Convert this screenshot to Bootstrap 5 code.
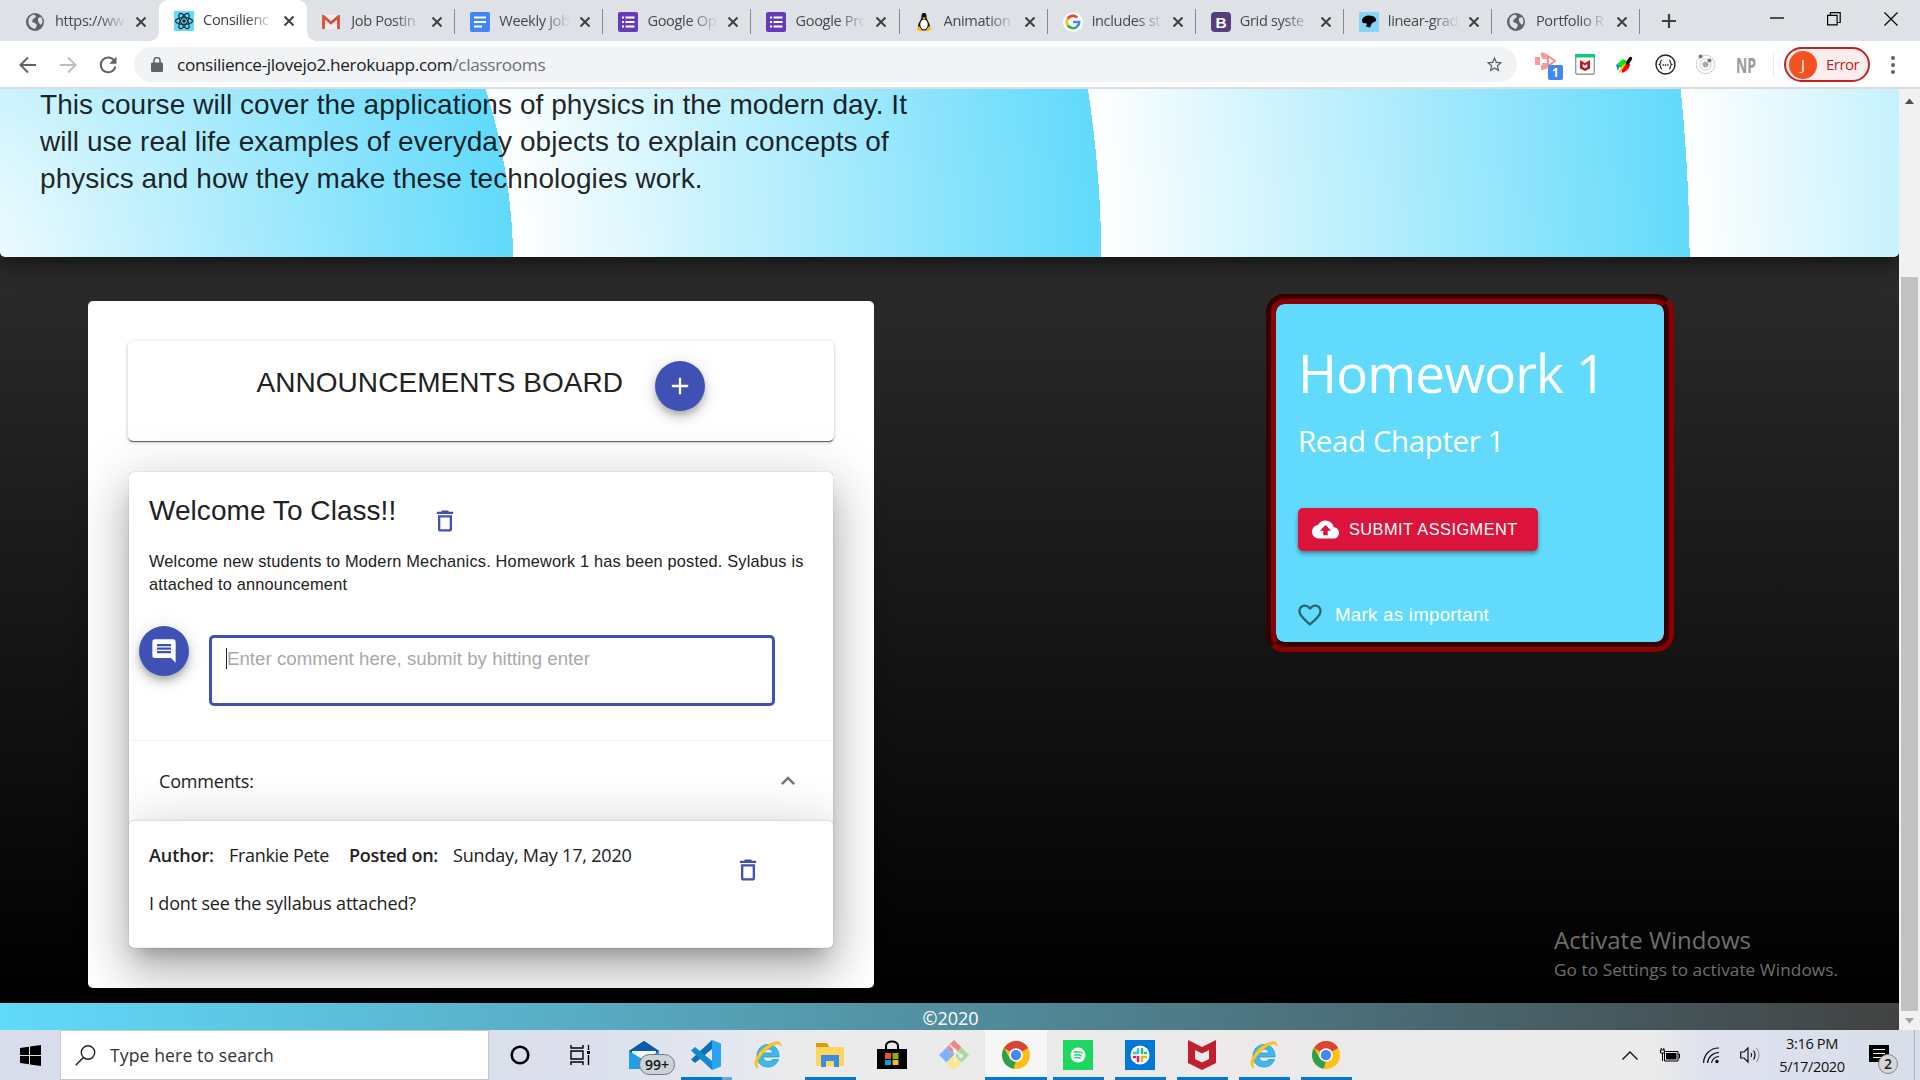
<!DOCTYPE html>
<html lang="en">
<head>
<meta charset="utf-8">
<title>Consilience</title>
<link href="https://cdn.jsdelivr.net/npm/bootstrap@5.3.0/dist/css/bootstrap.min.css" rel="stylesheet">
<style>
body{width:1920px;height:1080px;overflow:hidden;font-family:"Open Sans","Noto Sans",sans-serif;color:#212121;font-size:18.67px;line-height:1.5}
svg{display:block;flex:none}
.arial{font-family:"Liberation Sans",Arial,sans-serif}
.nw{white-space:nowrap}
/* browser chrome */
.tabstrip{height:41px;background:#dee1e6;padding-left:11px}
.tab-item{width:148.1px;height:41px;padding-left:15px;position:relative;font-size:14.6px;color:#45494d}
.tab-item .ttl{width:71px;margin-left:11px;margin-top:-1px;white-space:nowrap;letter-spacing:-.35px;-webkit-mask-image:linear-gradient(90deg,#000 62%,transparent 100%);mask-image:linear-gradient(90deg,#000 62%,transparent 100%)}
.tab-item .ttl.near{margin-left:9px}
.tab-item .cls{margin-left:9px}
.tab-item .near + .cls{margin-left:9px}
.tab-item.sep{border-right:1px solid #85888c}
.tab-item.sep,.tab-item.nosep{height:25px;margin-top:9px;align-self:flex-start}
.tab-item.on{background:#fff;border-radius:9px 9px 0 0;color:#3c4043}
.tab-item.on::before,.tab-item.on::after{content:"";position:absolute;bottom:0;width:9px;height:9px}
.tab-item.on::before{left:-9px;background:radial-gradient(circle at 0 0,transparent 8.5px,#fff 9px)}
.tab-item.on::after{right:-9px;background:radial-gradient(circle at 100% 0,transparent 8.5px,#fff 9px)}
.toolbar{height:48px;border-bottom:2px solid #dadce0;background:#fff;padding-left:19px;padding-top:1px}
.urlbar{width:1383px;height:35px;border-radius:18px;background:#f1f3f4;margin-left:17px;padding:0 13px 0 17px;font-size:17.2px;color:#202124}
.url-path{color:#6b6f74}
.profile{width:86px;height:35px;border:2px solid #c5221f;border-radius:18px;background:#fceeee;padding-left:3px;color:#b3261e;font-size:15px}
.avatar-j{width:28px;height:28px;border-radius:50%;background:#f4511e;color:#fff;font-size:15px}
/* page */
.viewport{height:941px}
.page{width:1899px;height:941px;overflow:hidden;background:linear-gradient(#2c2c2c 150px,#000 914px)}
.banner{height:171.500px;margin-top:-3.5px;padding-left:40px;border-radius:0 0 5px 5px;position:relative;
 background:repeating-radial-gradient(circle at -75px 181px,#fff 0,#61dafb 588.2px);box-shadow:0 4px 22px 2px rgba(0,0,0,.6)}
.banner p{width:900px;font-size:28px;line-height:37.33px;letter-spacing:.053px;color:rgba(0,0,0,.87)}
.board{width:786px;height:687px;margin:44px 0 0 88px;border-radius:5px;background:#fff;padding:39.5px 39px 0 40px}
.board-head{width:706px;height:100px;border-radius:5px;box-shadow:0 2px 1px -1px rgba(0,0,0,.45),0 1px 1px rgba(0,0,0,.25),0 1px 4px rgba(0,0,0,.2);padding:20px 0 0 128.500px}
.h28{font-size:28px;line-height:37.33px;font-weight:400;letter-spacing:.05px}
.fab{width:50px;height:50px;border-radius:50%;background:#3f51b5;color:#fff;box-shadow:0 4px 6px -1px rgba(0,0,0,.2),0 7px 12px rgba(0,0,0,.14),0 1px 21px rgba(0,0,0,.1);flex:none}
.post{width:704px;height:476px;margin:31px 0 0 1px;border-radius:5px;box-shadow:0 0 1px rgba(0,0,0,.4),0 13px 18px -8px rgba(0,0,0,.25),0 28px 44px 3px rgba(0,0,0,.17),0 9px 54px 9px rgba(0,0,0,.13)}
.post-body{height:268px;padding:20px 0 0 20px}
.post-text{width:670px;font-size:16.33px;line-height:23.3px;margin:21px 0 0;letter-spacing:.2px}
.cmt-row{margin:30px 0 0 -10px}
.cmt-box{width:566px;height:71px;margin:9px 0 0 20px;border:3px solid #3f51b5;border-radius:5px;font-size:18.67px;line-height:22px;color:#a8a8a8;padding:10px 0 0 14px;letter-spacing:.025px}
.caret{width:1px;height:21px;background:#222}
.seg{font-size:18px;line-height:28px;letter-spacing:-.18px}
.cmt-head{height:81px;border-top:1px solid #f5f5f5;padding:0 31px 0 30px}
.reply{height:127px;border-radius:5px;background:#fff;box-shadow:0 0 2px rgba(0,0,0,.3),0 -6px 45px rgba(0,0,0,.13);clip-path:inset(-70px 0 0 0);padding:20px 0 0 20px}
.w65{width:65px;letter-spacing:-.1px}.w100{width:100px;letter-spacing:-.32px}.w89{width:89px;letter-spacing:-.25px}
.hw{width:408px;height:358px;margin:37px 0 0 392px;border:10px groove darkred;border-radius:18px;background:#61dafb;color:#fff;padding:28px 0 0 22px;background-clip:padding-box}
.hw-title{font-size:53px;line-height:82px;letter-spacing:-.9px;font-weight:400}
.hw-sub{font-size:29.500px;line-height:44px;letter-spacing:-.4px;margin-top:5px}
.hw-btn{width:240px;height:43px;border-radius:5px;background:#dc143c;font-size:16.33px;padding-left:14px;margin-top:45px;box-shadow:0 3px 4px -1px rgba(0,0,0,.3),0 2px 5px rgba(0,0,0,.2)}
.hw-like{margin-top:50px;font-size:18.67px;letter-spacing:.277px}
.foot{height:27px;background:linear-gradient(90deg,#61dafb,#424242);color:#fff;position:absolute;left:0;bottom:0;width:1899px;padding:3px 0 0 2px;font-size:18px}
.watermark{position:absolute;left:1554px;top:832px;color:#6f6f6f}
.wm1{font-size:24px;line-height:38px}
.wm2{font-size:17.2px;line-height:21px;letter-spacing:.07px}
.sbar{width:21px;background:#f1f1f1}
.sthumb{width:17px;height:734px;margin-top:173px;background:#c1c1c1}
/* taskbar */
.taskbar{height:50px;background:linear-gradient(90deg,#d7ddea 0,#dbe0ec 600px,#e6e8f0 740px,#ebebeb 800px,#ebe9ea 1250px,#ebebeb 1650px,#dde2ee 1710px,#d8dee9 100%)}
.start{width:60px;padding-left:20px}
.search{width:429px;height:50px;background:#fff;border:1px solid #c8c8c8;padding-left:14px;font-size:17.6px;letter-spacing:.1px;color:#333}
.slot{width:62px;height:50px;position:relative}
.slot.run::after{content:"";position:absolute;left:6px;bottom:0;width:51px;height:3px;background:#0078d7}
.slot.act{background:#f6f6f7}
.slot.act::after{left:0;width:62px}
.slot.multi::after{background:linear-gradient(90deg,#0078d7 41px,#5fa9e4 41px)}
.cnt{position:absolute;left:26px;top:24px;height:21px;width:36px;border:1px solid #777;border-radius:11px;background:#ccd3d6;font-size:14px;line-height:19px;font-weight:600;color:#111;text-align:center}
.clock{font-size:14.6px;line-height:23px;letter-spacing:-.4px;color:#111;width:92px}
.ncnt{position:absolute;left:9px;top:9px;width:20px;height:20px;border-radius:50%;border:1px solid #888;background:#d5d7da;font-size:14px;line-height:18px;font-weight:600;text-align:center}
</style>
</head>
<body>
<svg width="0" height="0" class="position-absolute">
 <symbol id="globe" viewBox="0 0 18 18"><circle cx="9" cy="9" r="9" fill="#5f6368"/><path d="M3 5c2-3 5-4 6-3l1 2-3 2-1 3 3 1 2 2-2 4c-4-1-8-4-6-11zM12 5l3-1c2 3 2 6 0 8l-2-2-1-2z" fill="#dee1e6"/></symbol>
 <symbol id="x" viewBox="0 0 12 12"><path d="M1.5 1.5l9 9M10.500 1.500l-9 9" stroke="#3c4043" stroke-width="2"/></symbol>
 <symbol id="forms" viewBox="0 0 20 20"><rect width="20" height="20" rx="2" fill="#673ab7"/><path d="M4 5.500h2M4 10h2M4 14.500h2M7.500 5.500h9M7.500 10h9M7.500 14.500h9" stroke="#fff" stroke-width="2"/></symbol>
 <symbol id="trash" viewBox="0 0 24 24"><path fill="#3f51b5" d="M6 19c0 1.100.9 2 2 2h8c1.100 0 2-.9 2-2V7H6v12zM8 9h8v10H8V9zm7.500-5l-1-1h-5l-1 1H5v2h14V4z"/></symbol>
 <symbol id="chrome" viewBox="0 0 28 28"><circle cx="14" cy="14" r="14" fill="#fbc116"/><path d="M14 14L1.900 7A14 14 0 0 1 26.100 7z" fill="#d94435"/><path d="M14 0a14 14 0 0 1 12.100 7H14z" fill="#d94435"/><path d="M1.900 7L8 17.500 14 20l-2.500 7.800A14 14 0 0 1 1.900 7z" fill="#2da04e"/><circle cx="14" cy="14" r="6.800" fill="#fff"/><circle cx="14" cy="14" r="5.200" fill="#4688f1"/></symbol>
 <symbol id="ie" viewBox="0 0 30 30"><path d="M26 17H10c.5 3 2.500 4.500 5 4.500 2 0 3.500-.8 4.500-2h6C24 24 20 27 15 27 8.500 27 4 22.500 4 16S8.500 4.500 15 4.500 26.500 9.500 26 17zM10.200 13h9.600c-.3-2.500-2-4-4.800-4s-4.500 1.500-4.800 4z" fill="#3fb8ea" stroke="#1b8fd0" stroke-width=".7"/><path d="M5 28C-2 26 4 12 14 5.500 22 .5 29 .5 28 6c0-3-6-3-13 3C7 15 2 24 5 28z" fill="#fcc923" stroke="#eba900" stroke-width=".5"/></symbol>
</svg>

<div class="tabstrip d-flex align-items-center">
 <div class="tab-item nosep d-flex align-items-center"><svg width="18" height="18"><use href="#globe"/></svg><div class="ttl">https://ww</div><svg class="cls" width="12" height="12"><use href="#x"/></svg></div>
 <div class="tab-item on d-flex align-items-center"><svg width="20" height="20" viewBox="0 0 20 20"><rect width="20" height="20" rx="1" fill="#61dafb"/><g fill="none" stroke="#16323a" stroke-width="1.200"><ellipse cx="10" cy="10" rx="8.500" ry="3.400"/><ellipse cx="10" cy="10" rx="8.500" ry="3.400" transform="rotate(60 10 10)"/><ellipse cx="10" cy="10" rx="8.500" ry="3.400" transform="rotate(120 10 10)"/></g><circle cx="10" cy="10" r="1.800" fill="#16323a"/></svg><div class="ttl near">Consilienc</div><svg class="cls" width="12" height="12"><use href="#x"/></svg></div>
 <div class="tab-item sep d-flex align-items-center"><svg width="18" height="14" viewBox="0 0 18 14"><path d="M1 0h16v14H1z" fill="#eee"/><path d="M1.500 14V1.500L9 8l7.500-6.500V14" fill="none" stroke="#dd4b39" stroke-width="2.800"/></svg><div class="ttl">Job Postin</div><svg class="cls" width="12" height="12"><use href="#x"/></svg></div>
 <div class="tab-item sep d-flex align-items-center"><svg width="20" height="20" viewBox="0 0 20 20"><rect width="20" height="20" rx="2" fill="#4285f4"/><path d="M4 5.500h12M4 10h12M4 14.500h8" stroke="#fff" stroke-width="2"/></svg><div class="ttl near">Weekly job</div><svg class="cls" width="12" height="12"><use href="#x"/></svg></div>
 <div class="tab-item sep d-flex align-items-center"><svg width="20" height="20"><use href="#forms"/></svg><div class="ttl near">Google Op</div><svg class="cls" width="12" height="12"><use href="#x"/></svg></div>
 <div class="tab-item sep d-flex align-items-center"><svg width="20" height="20"><use href="#forms"/></svg><div class="ttl near">Google Pro</div><svg class="cls" width="12" height="12"><use href="#x"/></svg></div>
 <div class="tab-item sep d-flex align-items-center"><svg width="18" height="20" viewBox="0 0 18 20"><path d="M9 1c2.500 0 2.500 2 2.700 5 .3 2 3.300 5 3.300 9 0 2-3 3.500-6 3.500S3 17 3 15c0-4 3-7 3.300-9C6.500 3 6.500 1 9 1z" fill="#111"/><ellipse cx="9" cy="12.500" rx="3.700" ry="5" fill="#fff"/><path d="M7 5.500h4L9 7.500zM1 17l3-3 3 4-1.500 1.500zM17 17l-3-3-3 4 1.500 1.500z" fill="#fdb813"/></svg><div class="ttl">Animation</div><svg class="cls" width="12" height="12"><use href="#x"/></svg></div>
 <div class="tab-item sep d-flex align-items-center"><svg width="20" height="20" viewBox="0 0 20 20"><circle cx="10" cy="10" r="10" fill="#fff"/><g fill="none" stroke-width="2.600"><path d="M4.700 6.800A6.200 6.200 0 0 1 14.300 5.600" stroke="#ea4335"/><path d="M4.700 13.200a6.200 6.200 0 0 1 0-6.400" stroke="#fbbc05"/><path d="M14 14.700A6.200 6.200 0 0 1 4.700 13.200" stroke="#34a853"/><path d="M10 10h6.200a6.200 6.200 0 0 1-2.200 4.700" stroke="#4285f4"/></g></svg><div class="ttl near">includes st</div><svg class="cls" width="12" height="12"><use href="#x"/></svg></div>
 <div class="tab-item sep d-flex align-items-center"><svg width="20" height="20" viewBox="0 0 20 20"><rect width="20" height="20" rx="4" fill="#563d7c"/><text x="10" y="15.500" text-anchor="middle" font-family="Liberation Sans" font-weight="700" font-size="15.500" fill="#fff">B</text></svg><div class="ttl near">Grid syste</div><svg class="cls" width="12" height="12"><use href="#x"/></svg></div>
 <div class="tab-item sep d-flex align-items-center"><svg width="20" height="20" viewBox="0 0 20 20"><rect width="20" height="20" fill="#89d3f5"/><path d="M3 9c0-4 4-5.500 7-5.500 5 0 8 3 7 5.500l-4 2-2 4.500-4-1 1-3-4-.5z" fill="#000"/></svg><div class="ttl near">linear-grad</div><svg class="cls" width="12" height="12"><use href="#x"/></svg></div>
 <div class="tab-item sep d-flex align-items-center"><svg width="18" height="18"><use href="#globe"/></svg><div class="ttl">Portfolio R</div><svg class="cls" width="12" height="12"><use href="#x"/></svg></div>
 <svg style="margin-left:21px" width="16" height="16" viewBox="0 0 16 16"><path d="M8 1v14M1 8h14" stroke="#3c4043" stroke-width="2.200"/></svg>
 <div class="d-flex align-items-center ms-auto" style="padding-right:22px;margin-bottom:4px;gap:43px">
  <svg width="14" height="14" viewBox="0 0 14 14"><path d="M0 6h14" stroke="#000" stroke-width="1.300"/></svg>
  <svg width="14" height="14" viewBox="0 0 14 14"><path d="M.6 3.400h9.500v9.500H.6zM3.400 3V.7h9.800v9.800h-2.700" fill="none" stroke="#000" stroke-width="1.200"/></svg>
  <svg width="14" height="14" viewBox="0 0 14 14"><path d="M.5.500l13 13M13.500.5l-13 13" stroke="#000" stroke-width="1.200"/></svg>
 </div>
</div>
<div class="toolbar d-flex align-items-center">
 <svg width="18" height="18" viewBox="0 0 18 18"><path d="M17 9H2M9 1.500L1.500 9 9 16.500" fill="none" stroke="#5f6368" stroke-width="2"/></svg>
 <svg style="margin-left:22px" width="18" height="18" viewBox="0 0 18 18"><path d="M1 9h15M9 1.500L16.500 9 9 16.500" fill="none" stroke="#bcbfc2" stroke-width="2"/></svg>
 <svg style="margin-left:22px" width="18" height="18" viewBox="0 0 18 18"><path d="M15.500 5A7.400 7.400 0 1 0 16.400 10.500" fill="none" stroke="#5f6368" stroke-width="2"/><path d="M17.500.5v7.300h-7.300z" fill="#5f6368"/></svg>
 <div class="urlbar d-flex align-items-center">
  <svg width="12" height="15" viewBox="0 0 12 15"><rect y="5.500" width="12" height="9.500" rx="1.200" fill="#5f6368"/><path d="M3 6V3.500a3 3 0 0 1 6 0V6" fill="none" stroke="#5f6368" stroke-width="1.600"/></svg>
  <div class="nw" style="margin-left:14px;letter-spacing:-.34px">consilience-jlovejo2.herokuapp.com<span class="url-path">/classrooms</span></div>
  <svg class="ms-auto" width="19" height="19" viewBox="0 0 24 24"><path fill="#5f6368" d="M22 9.240l-7.190-.62L12 2 9.190 8.630 2 9.240l5.460 4.730L5.820 21 12 17.270 18.180 21l-1.630-7.030L22 9.240zM12 15.400l-3.760 2.270 1-4.280-3.320-2.880 4.380-.38L12 6.100l1.710 4.040 4.380.38-3.320 2.880 1 4.280L12 15.400z"/></svg>
 </div>
 <svg style="margin-left:18px" width="30" height="32" viewBox="0 0 30 32"><path d="M0 8h5v8H0zM7 6h5v4H7zM7 14h5v4H7z" fill="#f79a9a"/><path d="M6 3l6 2v3H6zM6 16h6v4l-6 1z" fill="#f79a9a"/><path d="M13 7l7 5-7 5z" fill="none" stroke="#f28b82" stroke-width="1.800"/><rect x="13" y="16" width="15" height="15" rx="2" fill="#4285f4"/><text x="20.500" y="28" text-anchor="middle" font-family="Open Sans" font-weight="700" font-size="12" fill="#fff">1</text></svg>
 <svg style="margin-left:10px" width="20" height="21" viewBox="0 0 20 21"><rect x=".7" y=".7" width="18.600" height="19.600" rx="1.500" fill="#fff" stroke="#9a9a9a" stroke-width="1.400"/><path d="M0 0h20v3.500H0z" fill="#0fca70"/><path d="M5 6l5 3 5-3v8.500L10 17l-5-2.500z" fill="#c01818"/><path d="M7.700 10l2.300 1.400 2.300-1.400v3L10 14.200 7.700 13z" fill="#fff"/></svg>
 <svg style="margin-left:21px" width="17" height="18" viewBox="0 0 17 18"><path d="M0 9l7-6 4 2-4 8z" fill="#0e0"/><path d="M2 17l4-7 4-3 1 5z" fill="#fc0"/><path d="M6 14l5-8 3 2c0 4-3 7-8 9z" fill="#f00"/><path d="M0 9h4l-2 6z" fill="#08f"/><path d="M11.500 7l3-4.500" stroke="#111" stroke-width="3.400" stroke-linecap="round"/></svg>
 <svg style="margin-left:22px" width="21" height="21" viewBox="0 0 21 21"><circle cx="10.500" cy="10.500" r="9.500" fill="#fff" stroke="#222" stroke-width="1.400"/><path d="M7 6c-2 0-1 4-2.500 4.500C6 11 5 15 7 15M14 6c2 0 1 4 2.500 4.500C15 11 16 15 14 15" fill="none" stroke="#222" stroke-width="1.200"/><path d="M7.500 11h6" stroke="#222" stroke-width="1.400" stroke-dasharray="1.400 .9"/></svg>
 <svg style="margin-left:19px" width="21" height="21" viewBox="0 0 21 21"><circle cx="10.500" cy="10.500" r="9.300" fill="none" stroke="#ccc"/><circle cx="10.500" cy="10.500" r="5.500" fill="none" stroke="#ccc"/><circle cx="10.500" cy="10.500" r="3" fill="#aaa"/><circle cx="5.500" cy="2.500" r="2" fill="#777"/><circle cx="14.500" cy="6.500" r="2" fill="#777"/></svg>
 <svg style="margin-left:20px" width="20" height="20" viewBox="0 0 20 20"><text x="0" y="17.500" font-family="Open Sans" font-weight="700" font-size="21" textLength="20" lengthAdjust="spacingAndGlyphs" fill="#9a9a9a">NP</text></svg>
 <div style="margin-left:17px;height:24px" class="border-start border-secondary-subtle"></div>
 <div class="profile d-flex align-items-center" style="margin-left:10px"><div class="avatar-j d-flex align-items-center justify-content-center">J</div><span style="margin-left:9px;letter-spacing:-.5px">Error</span></div>
 <svg style="margin-left:20px" width="6" height="20" viewBox="0 0 6 20"><g fill="#5f6368"><circle cx="3" cy="3" r="2"/><circle cx="3" cy="10" r="2"/><circle cx="3" cy="17" r="2"/></g></svg>
</div>

<div class="viewport d-flex position-relative">
 <main class="page d-flex flex-column">
  <header class="banner arial"><p class="mb-0 nw">This course will cover the applications of physics in the modern day. It<br>will use real life examples of everyday objects to explain concepts of<br>physics and how they make these technologies work.</p></header>
  <div class="d-flex align-items-start">
   <section class="board">
    <div class="board-head d-flex align-items-start">
     <h1 class="h28 arial mb-0 nw" style="margin-top:3px">ANNOUNCEMENTS BOARD</h1>
     <div class="fab d-flex align-items-center justify-content-center" style="margin-left:32px"><svg width="28" height="28" viewBox="0 0 24 24"><path fill="#fff" d="M19 13h-6v6h-2v-6H5v-2h6V5h2v6h6v2z"/></svg></div>
    </div>
    <article class="post">
     <div class="post-body">
      <div class="d-flex align-items-start"><h2 class="h28 arial mb-0 nw">Welcome To Class!!</h2><svg style="margin:15px 0 -6px 35px" width="28" height="28"><use href="#trash"/></svg></div>
      <p class="post-text arial nw">Welcome new students to Modern Mechanics. Homework 1 has been posted. Sylabus is<br>attached to announcement</p>
      <div class="cmt-row d-flex align-items-start">
       <div class="fab d-flex align-items-center justify-content-center"><svg width="28" height="28" viewBox="0 0 24 24"><path fill="#fff" d="M21.990 4c0-1.100-.89-2-1.990-2H4c-1.100 0-2 .9-2 2v12c0 1.100.9 2 2 2h14l4 4-.01-18zM18 14H6v-2h12v2zm0-3H6V9h12v2zm0-3H6V6h12v2z"/></svg></div>
       <div class="cmt-box arial d-flex align-items-start"><div class="caret"></div><span class="nw">Enter comment here, submit by hitting enter</span></div>
      </div>
     </div>
     <div class="cmt-head seg d-flex align-items-center justify-content-between"><span>Comments:</span><svg width="28" height="28" viewBox="0 0 24 24"><path fill="#757575" d="M12 8l-6 6 1.410 1.410L12 10.830l4.590 4.580L18 14z"/></svg></div>
     <div class="reply seg">
      <div class="d-flex align-items-start nw"><strong class="fw-semibold w65">Author:</strong><span class="w100" style="margin-left:15px">Frankie Pete</span><strong class="fw-semibold w89" style="margin-left:20px">Posted on:</strong><span style="margin-left:15px">Sunday, May 17, 2020</span><svg style="margin:15px 71px 0 auto" width="28" height="28"><use href="#trash"/></svg></div>
      <div style="margin-top:5px" class="nw">I dont see the syllabus attached?</div>
     </div>
    </article>
   </section>
   <section class="hw">
    <div class="hw-title nw">Homework 1</div>
    <div class="hw-sub nw">Read Chapter 1</div>
    <div class="hw-btn arial d-flex align-items-center nw"><svg width="27" height="27" viewBox="0 0 24 24"><path fill="#fff" d="M19.350 10.040C18.670 6.590 15.640 4 12 4 9.110 4 6.600 5.640 5.350 8.040 2.340 8.360 0 10.910 0 14c0 3.310 2.690 6 6 6h13c2.760 0 5-2.240 5-5 0-2.640-2.050-4.780-4.650-4.960zM14 13v4h-4v-4H7l5-5 5 5h-3z"/></svg><span style="margin-left:10px;letter-spacing:.47px">SUBMIT ASSIGMENT</span></div>
    <div class="hw-like arial d-flex align-items-center nw"><svg style="margin-left:-2px" width="28" height="28" viewBox="0 0 24 24"><path fill="rgba(0,0,0,.54)" d="M16.500 3c-1.740 0-3.410.81-4.500 2.090C10.910 3.810 9.240 3 7.500 3 4.420 3 2 5.420 2 8.500c0 3.780 3.400 6.860 8.550 11.540L12 21.350l1.450-1.320C18.600 15.360 22 12.280 22 8.500 22 5.420 19.580 3 16.500 3zm-4.400 15.550l-.1.100-.1-.1C7.140 14.240 4 11.390 4 8.500 4 6.500 5.500 5 7.500 5c1.540 0 3.040.99 3.570 2.360h1.870C13.460 5.990 14.960 5 16.500 5c2 0 3.500 1.500 3.500 3.500 0 2.890-3.140 5.740-7.900 10.050z"/></svg><span style="margin-left:11px">Mark as important</span></div>
   </section>
  </div>
 </main>
 <footer class="foot d-flex align-items-center justify-content-center"><span>©2020</span></footer>
 <div class="watermark nw"><div class="wm1">Activate Windows</div><div class="wm2">Go to Settings to activate Windows.</div></div>
 <div class="sbar d-flex flex-column align-items-center">
  <svg style="margin:9px 0 0" width="9" height="6" viewBox="0 0 9 6"><path d="M0 6L4.500.5 9 6z" fill="#505050"/></svg>
  <div class="sthumb"></div>
  <svg style="margin-top:7px" width="9" height="6" viewBox="0 0 9 6"><path d="M0 0l4.500 5.500L9 0z" fill="#a3a3a3"/></svg>
 </div>
</div>

<div class="taskbar d-flex align-items-center">
 <div class="start"><svg width="21" height="21" viewBox="0 0 21 21"><path d="M0 3l9-1.300v8.300H0zM10 1.500L21 0v10H10zM0 11h9v8.300L0 18zM10 11h11v10l-11-1.500z"/></svg></div>
 <div class="search d-flex align-items-center"><svg width="21" height="21" viewBox="0 0 21 21"><circle cx="13" cy="7.500" r="6.700" fill="none" stroke="#222" stroke-width="1.400"/><path d="M8.500 12.500L.7 20.300" stroke="#222" stroke-width="1.500"/></svg><span class="nw" style="margin-left:14px">Type here to search</span></div>
 <div class="slot d-flex align-items-center justify-content-center"><svg width="20" height="20" viewBox="0 0 20 20"><circle cx="10" cy="10" r="8.300" fill="none" stroke="#000" stroke-width="2.600"/></svg></div>
 <div class="slot d-flex align-items-center justify-content-center"><svg style="margin-right:4px" width="21" height="20" viewBox="0 0 21 20"><path d="M1 0v3h12V0M1 20v-3h12v3M1 6h12v8H1zM18.500 0v5M18.500 10v10" fill="none" stroke="#000" stroke-width="1.400"/><path d="M17 6h3v3h-3z"/></svg></div>
 <div class="slot d-flex align-items-center justify-content-center"><svg width="30" height="30" viewBox="0 0 30 30"><path d="M0 11L15 1l15 10v18H0z" fill="#0a5bb0"/><path d="M3 10h24v12H3z" fill="#f5f8fb"/><path d="M0 11l15 9 15-9v18H0z" fill="#1f9fe8"/><path d="M0 11L15 1l15 10z" fill="#0a5bb0"/></svg><span class="cnt">99+</span></div>
 <div class="slot run multi d-flex align-items-center justify-content-center"><svg width="30" height="30" viewBox="0 0 30 30"><path d="M21 0l9 3.500v23L21 30z" fill="#2aa4f0"/><path d="M21 0v9L4 23l-4-3.500z" fill="#0c6fb8"/><path d="M21 30v-9L4 7 0 10.500z" fill="#1488d0"/></svg></div>
 <div class="slot d-flex align-items-center justify-content-center"><svg width="30" height="30"><use href="#ie"/></svg></div>
 <div class="slot run d-flex align-items-center justify-content-center"><svg width="28" height="26" viewBox="0 0 28 26"><path d="M0 1h11l3 4h14v19H0z" fill="#ffd45f"/><path d="M0 1h11l2 4H0z" fill="#d99a15"/><path d="M5 25V13h18v12h-5v-6h-8v6z" fill="#3b8ede"/></svg></div>
 <div class="slot d-flex align-items-center justify-content-center"><svg width="30" height="30" viewBox="0 0 30 30"><path d="M0 9h30v20H0z"/><path d="M9 12V6c0-6 12-6 12 0v6" fill="none" stroke="#000" stroke-width="2"/><path d="M8 13h6v6H8z" fill="#f25022"/><path d="M15.500 13h6v6h-6z" fill="#7fba00"/><path d="M8 20h6v5H8z" fill="#00a4ef"/><path d="M15.500 20h6v5h-6z" fill="#ffb900"/></svg></div>
 <div class="slot d-flex align-items-center justify-content-center"><svg width="30" height="30" viewBox="0 0 30 30"><path d="M15 0l7.500 7.500L15 15 7.500 7.500z" fill="#f58181"/><path d="M7.500 7.500L15 15l-7.500 7.500L0 15z" fill="#80b3ff"/><path d="M22.500 7.500L30 15l-7.500 7.500L15 15z" fill="#a8dba0"/><path d="M15 15l7.500 7.500L15 30l-7.500-7.500z" fill="#ffe680"/><path d="M11 5l5 5v12M16 11l6 5" stroke="#eee" stroke-width="1.800" fill="none"/><circle cx="16" cy="11" r="2.200" fill="#eee"/><circle cx="16" cy="21" r="2.200" fill="#eee"/><circle cx="22" cy="16" r="2.200" fill="#eee"/></svg></div>
 <div class="slot run act d-flex align-items-center justify-content-center"><svg width="28" height="28"><use href="#chrome"/></svg></div>
 <div class="slot run d-flex align-items-center justify-content-center"><svg width="30" height="30" viewBox="0 0 30 30"><path d="M0 0h30v30H0z" fill="#1ed760"/><circle cx="15" cy="15" r="7.500" fill="#fff"/><path d="M10.500 12.500c3-1 6.500-.7 9.300.8M11 15.300c2.600-.8 5.500-.5 7.800.8M11.500 18c2-.6 4.500-.4 6.300.6" fill="none" stroke="#1ed760" stroke-width="1.500"/></svg></div>
 <div class="slot run d-flex align-items-center justify-content-center"><svg width="30" height="30" viewBox="0 0 30 30"><path d="M0 0h30v30H0z" fill="#0078d7"/><circle cx="15" cy="15" r="9.500" fill="#fff"/><g stroke-width="2.600" stroke-linecap="round"><path d="M13 9v4M9 13h4" stroke="#36c5f0"/><path d="M17 9v4M21 13h-1" stroke="#2eb67d"/><path d="M17 21v-4M17 17h4" stroke="#ecb22e"/><path d="M13 21v-4M9 17h1" stroke="#e01e5a"/></g></svg></div>
 <div class="slot run d-flex align-items-center justify-content-center"><svg width="28" height="30" viewBox="0 0 28 30"><path d="M0 0l14 7L28 0v23l-14 7-14-7z" fill="#c01f2e"/><path d="M7 10l7 3.500 7-3.500v9l-7 3.500L7 19z" fill="#ebe9eb"/></svg></div>
 <div class="slot run d-flex align-items-center justify-content-center"><svg width="30" height="30"><use href="#ie"/></svg></div>
 <div class="slot run d-flex align-items-center justify-content-center"><svg width="28" height="28"><use href="#chrome"/></svg></div>
 <div class="d-flex align-items-center ms-auto h-100">
  <svg width="16" height="9" viewBox="0 0 16 9"><path d="M.5 8.500L8 1l7.500 7.500" fill="none" stroke="#111" stroke-width="1.400"/></svg>
  <svg style="margin-left:22px" width="20" height="14" viewBox="0 0 20 14"><path d="M4.500 3.500h13.500v9.500H4.500zM18.500 6h1v4h-1" fill="none" stroke="#000" stroke-width="1"/><path d="M6 5h10.500v6.500H6z"/><path d="M.5 2h4v3h-4zM1.200 0v2M3.800 0v2M2.500 5v8" fill="none" stroke="#000"/></svg>
  <svg style="margin-left:23px" width="17" height="17" viewBox="0 0 17 17"><g fill="none" stroke="#111" stroke-width="1.200"><path d="M.6 16A15 15 0 0 1 16 1M4.500 16A11.500 11.500 0 0 1 16 5.500M8.500 16A7.500 7.500 0 0 1 16 9.500"/></g><circle cx="14" cy="14.500" r="1.700"/></svg>
  <svg style="margin-left:20px" width="21" height="18" viewBox="0 0 21 18"><path d="M.7 6H4l4-4v14l-4-4H.7z" fill="none" stroke="#111" stroke-width="1.200"/><path d="M11 7q1.500 2 0 4M13.500 4.500q3 4.500 0 9" fill="none" stroke="#111" stroke-width="1.200"/><path d="M16.500 2q5 7 0 14" fill="none" stroke="#999" stroke-width="1.200"/></svg>
  <div class="clock text-center" style="margin-left:5px">3:16 PM<br>5/17/2020</div>
  <div class="position-relative" style="margin:1px 0 0 11px"><svg width="20" height="21" viewBox="0 0 20 21"><path d="M0 0h20v17h-6v4l-4-4H0z"/><path d="M4 4.500h12M4 8.500h12M4 12.500h12" stroke="#fff" stroke-width="1.200"/></svg><span class="ncnt">2</span></div>
  <div class="h-100" style="margin-left:25px;width:6px;border-left:1px solid #aab0ba"></div>
 </div>
</div>
<script src="https://cdn.jsdelivr.net/npm/bootstrap@5.3.0/dist/js/bootstrap.bundle.min.js"></script>
</body>
</html>
